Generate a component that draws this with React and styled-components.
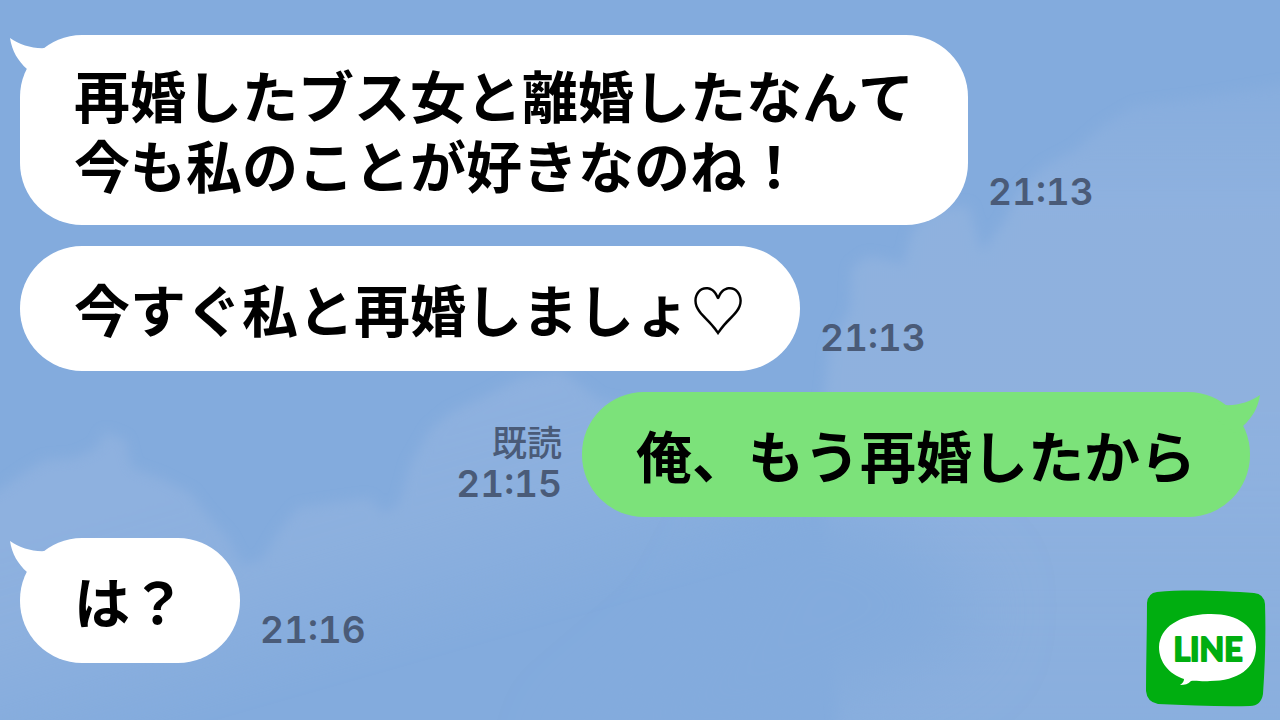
import * as React from "react";
import styled, { createGlobalStyle } from "styled-components";

const sky = "#83abdd";
const cloud = "#90b2df";
const metaColor = "#4a5b78";

const GlobalStyle = createGlobalStyle`
  body {
    margin: 0;
    background-color: ${sky};
  }
`;

const Screen = styled.main`
  position: relative;
  min-height: 100vh;
  box-sizing: border-box;
  overflow: hidden;
  background-color: ${sky};
  font-family: "Noto Sans CJK JP", sans-serif;
  font-kerning: none;
`;

const Sky = styled.svg`
  position: absolute;
  inset: 0;
  width: 100%;
  height: 100%;
`;

const Messages = styled.ul`
  position: relative;
  display: flex;
  flex-direction: column;
  gap: 21px;
  margin: 0;
  padding: 35px 30px 35px 20px;
  list-style: none;
`;

const Row = styled.li`
  display: flex;
  flex-direction: ${(props) => (props.$mine ? "row-reverse" : "row")};
  align-items: flex-end;
  gap: 20px;
`;

const Bubble = styled.div`
  position: relative;
  display: flex;
  align-items: center;
  box-sizing: border-box;
  min-height: 125px;
  padding: 24px 54px 26px;
  border-radius: 62px;
  background-color: ${(props) => (props.$mine ? "#7ce27a" : "#ffffff")};
  color: #000000;
`;

const Text = styled.p`
  margin: 0;
  font-size: 56px;
  font-weight: 700;
  line-height: 70px;
  white-space: pre-line;
`;

const TailShape = styled.svg`
  position: absolute;
  top: 3px;
  ${(props) => (props.$mine ? "right: -10px;" : "left: -10px;")}
  width: 44px;
  height: 40px;
  transform: ${(props) => (props.$mine ? "scaleX(-1)" : "none")};
`;

const Meta = styled.div`
  display: flex;
  flex-direction: column;
  align-items: ${(props) => (props.$mine ? "flex-end" : "flex-start")};
  padding-bottom: 12px;
  color: ${metaColor};
`;

const Read = styled.span`
  font-size: 35px;
  font-weight: 500;
  line-height: 43px;
`;

const Time = styled.time`
  font-family: Inter, sans-serif;
  font-size: 37px;
  font-weight: 600;
  font-variant-numeric: tabular-nums;
  line-height: 43px;
`;

const Logo = styled.svg`
  position: absolute;
  right: 14px;
  bottom: 13px;
  width: 120px;
  height: 117px;
`;

const LogoText = styled.text`
  font-family: Lato, sans-serif;
  font-size: 32px;
  font-weight: 700;
  fill: #00ae10;
  stroke: #00ae10;
  stroke-width: 2px;
  stroke-linejoin: round;
`;

const messages = [
  {
    id: 1,
    text: "再婚したブス女と離婚したなんて\n今も私のことが好きなのね！",
    time: "21:13",
    tail: true,
  },
  { id: 2, text: "今すぐ私と再婚しましょ♡", time: "21:13" },
  {
    id: 3,
    text: "俺、もう再婚したから",
    time: "21:15",
    mine: true,
    read: true,
    tail: true,
  },
  { id: 4, text: "は？", time: "21:16", tail: true },
];

const Tail = ({ mine }) => (
  <TailShape $mine={mine} viewBox="0 0 44 40" aria-hidden="true">
    <path
      d="M0 0C10 7 23 11 36 10L44 24L22 40L17 31C8 23 2 13 0 0Z"
      fill={mine ? "#7ce27a" : "#ffffff"}
    />
  </TailShape>
);

const Clouds = () => (
  <Sky viewBox="0 0 1280 720" preserveAspectRatio="none" aria-hidden="true">
    <defs>
      <filter id="soft" x="-20%" y="-20%" width="140%" height="140%">
        <feGaussianBlur stdDeviation="6" />
      </filter>
      <filter id="haze" x="-50%" y="-50%" width="200%" height="200%">
        <feGaussianBlur stdDeviation="36" />
      </filter>
      <linearGradient
        id="leftFade"
        gradientUnits="userSpaceOnUse"
        x1="240"
        y1="480"
        x2="300"
        y2="690"
      >
        <stop offset="0" stopColor={cloud} stopOpacity="0.8" />
        <stop offset="0.4" stopColor={cloud} stopOpacity="0.7" />
        <stop offset="1" stopColor={cloud} stopOpacity="0" />
      </linearGradient>
      <linearGradient
        id="rightFade"
        gradientUnits="userSpaceOnUse"
        x1="1000"
        y1="80"
        x2="1000"
        y2="740"
      >
        <stop offset="0" stopColor={cloud} stopOpacity="0.3" />
        <stop offset="0.2" stopColor={cloud} stopOpacity="0.9" />
        <stop offset="0.5" stopColor={cloud} stopOpacity="0.9" />
        <stop offset="1" stopColor={cloud} stopOpacity="0.5" />
      </linearGradient>
    </defs>
    <path
      filter="url(#soft)"
      fill="url(#leftFade)"
      d="M-30 500L0 490L25 472L45 460L75 458L97 448L105 432L125 440L132 468L160 478L190 493L207 515L228 538L242 565L262 560L280 530L298 508L340 502L368 498L385 514L400 502L410 465L430 430L450 413L490 394L520 378L560 370L600 400L840 440L840 760L-30 760Z"
    />
    <path
      filter="url(#soft)"
      fill="url(#rightFade)"
      d="M820 440L830 345L850 310L852 268L868 256L904 264L912 232L930 210L968 206L982 252L1004 222L1020 190L1045 166L1075 150L1105 124L1135 106L1200 98L1320 78L1320 760L840 760Z"
    />
    <path
      filter="url(#haze)"
      fill={sky}
      d="M780 490L900 530L980 600L960 650L840 700L740 750L560 760L700 640Z"
    />
  </Sky>
);

const Message = ({ message }) => {
  const { text, time, mine, read, tail } = message;
  return (
    <Row $mine={mine}>
      <Bubble $mine={mine}>
        {tail && <Tail mine={mine} />}
        <Text>{text}</Text>
      </Bubble>
      <Meta $mine={mine}>
        {read && <Read>既読</Read>}
        <Time>{time}</Time>
      </Meta>
    </Row>
  );
};

export default function App() {
  return (
    <>
      <GlobalStyle />
      <Screen>
        <Clouds />
        <Messages>
          {messages.map((message) => (
            <Message key={message.id} message={message} />
          ))}
        </Messages>
        <Logo viewBox="0 0 120 117" role="img" aria-label="LINE">
          <path
            d="M11 2C40 -1 80 1 108 3Q118 4 119 14C120 45 119 75 117 104Q115 116 104 116C75 117 42 115 12 114Q1 112 0 101C0 72 1 42 1 13Q2 3 11 2Z"
            fill="#00ae10"
          />
          <path
            d="M62 24C91 23 110 36 110 57C110 78 92 91 64 91C56 92 50 90 45 91C42 94 39 95 34 95C37 93 38 91 38 89C23 84 13 72 13 57C14 37 33 25 62 24Z"
            fill="#ffffff"
          />
          <LogoText x="62" y="71" textAnchor="middle">
            LINE
          </LogoText>
        </Logo>
      </Screen>
    </>
  );
}
